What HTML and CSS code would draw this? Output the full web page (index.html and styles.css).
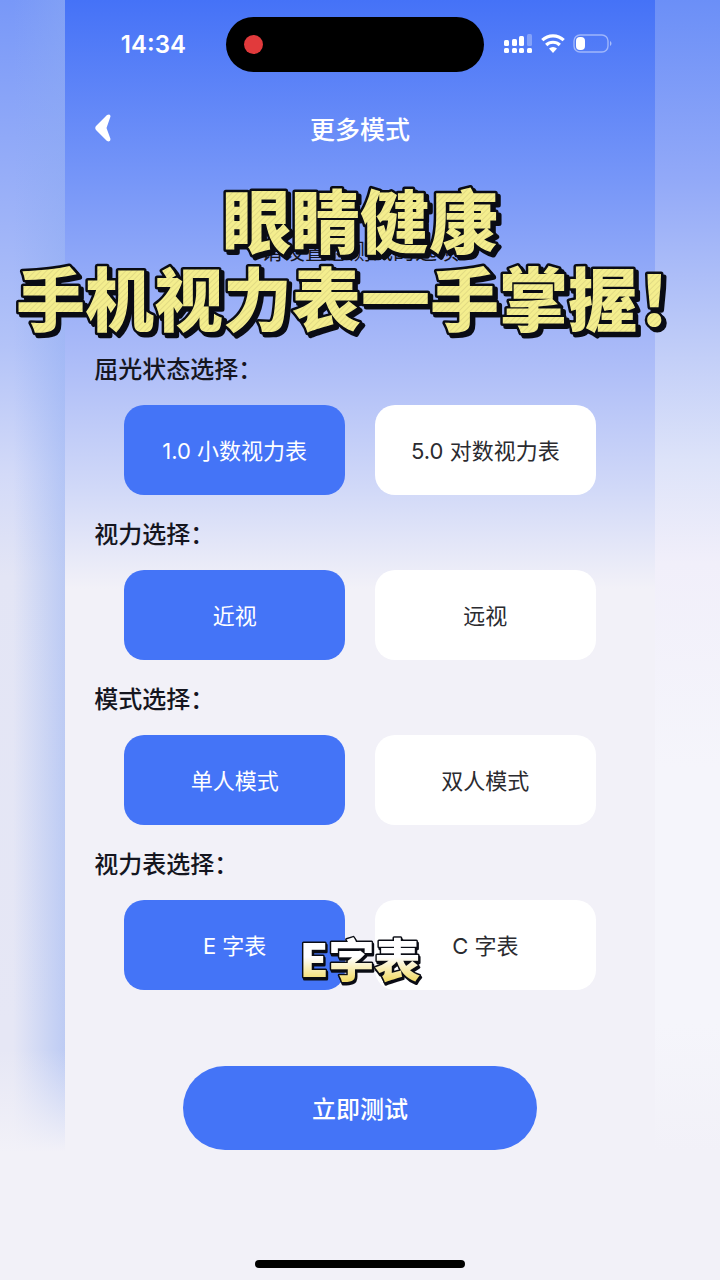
FILE: index.html
```
<!DOCTYPE html>
<html lang="zh-CN">
<head>
    <meta charset="UTF-8">
    <meta name="viewport" content="width=device-width, initial-scale=1.0">
    <title>更多模式</title>
    <link rel="stylesheet" href="styles.css">
</head>
<body>
    <div class="backdrop">
        <div class="side side-left"></div>
        <div class="phone">
            <div class="status-bar">
                <span class="time">14:34</span>
                <div class="island"><span class="rec-dot"></span></div>
                <div class="status-icons">
                    <svg width="29" height="20" viewBox="0 0 29 20" fill="#fff">
                        <rect x="0" y="6" width="5" height="6" rx="1.5"/>
                        <rect x="8" y="5" width="5" height="7" rx="1.5"/>
                        <rect x="15" y="2" width="5" height="10" rx="1.5"/>
                        <rect x="23" y="0" width="5" height="12" rx="1.5" opacity="0.3"/>
                        <rect x="0" y="14" width="5" height="5" rx="1.5"/>
                        <rect x="8" y="14" width="5" height="5" rx="1.5"/>
                        <rect x="15" y="14" width="5" height="5" rx="1.5"/>
                        <rect x="23" y="14" width="5" height="5" rx="1.5"/>
                    </svg>
                    <svg width="24" height="20" viewBox="0 0 24 20" fill="none" stroke="#fff" stroke-width="3.2">
                        <path d="M1.3 6.200a15.400 15.400 0 0 1 21.400 0"/>
                        <path d="M5.2 11a9.800 9.800 0 0 1 13.600 0"/>
                        <path d="M12 19l-4-4.500a5.800 5.800 0 0 1 8 0z" fill="#fff" stroke="none"/>
                    </svg>
                    <svg width="39" height="20" viewBox="0 0 39 20">
                        <rect x="1" y="1" width="34" height="17" rx="6" fill="none" stroke="#fff" stroke-opacity="0.45" stroke-width="1.4"/>
                        <rect x="3" y="3" width="9" height="13" rx="4" fill="#fff"/>
                        <path d="M37 7c2 1 2 4 0 5z" fill="#fff" fill-opacity="0.5"/>
                    </svg>
                </div>
            </div>

            <header class="nav">
                <button class="back" aria-label="返回">
                    <svg width="18" height="28" viewBox="0 0 18 28" fill="#fff">
                        <path d="M12 1Q15.500-0.500 15.500 2.500L11.500 14l4 11Q15.500 28.500 12 27L1 16Q-0.500 14 1 12Z"/>
                    </svg>
                </button>
                <h1>更多模式</h1>
            </header>

            <p class="hint">请设置您测试的选项</p>

            <main class="settings">
                <section>
                    <h2 id="refraction">屈光状态选择：</h2>
                    <div class="options" role="group" aria-labelledby="refraction">
                        <button class="option active">1.0 小数视力表</button>
                        <button class="option">5.0 对数视力表</button>
                    </div>
                </section>
                <section>
                    <h2 id="vision">视力选择：</h2>
                    <div class="options" role="group" aria-labelledby="vision">
                        <button class="option active">近视</button>
                        <button class="option">远视</button>
                    </div>
                </section>
                <section>
                    <h2 id="mode">模式选择：</h2>
                    <div class="options" role="group" aria-labelledby="mode">
                        <button class="option active">单人模式</button>
                        <button class="option">双人模式</button>
                    </div>
                </section>
                <section>
                    <h2 id="chart">视力表选择：</h2>
                    <div class="options" role="group" aria-labelledby="chart">
                        <button class="option active">E 字表</button>
                        <button class="option">C 字表</button>
                    </div>
                </section>
            </main>

            <button class="start">立即测试</button>
            <div class="home-indicator"></div>
        </div>
        <div class="side side-right"></div>
    </div>

    <!-- video captions -->
    <svg class="caption" viewBox="0 0 720 200">
        <defs>
            <pattern id="stripes" width="4" height="4" patternUnits="userSpaceOnUse" patternTransform="rotate(45)" stroke="none">
                <rect width="4" height="4" fill="#f4ee8e"/>
                <rect width="1" height="4" fill="#e2db84"/>
            </pattern>
        </defs>
        <text x="360" y="84" text-anchor="middle">眼睛健康</text>
        <text x="16" y="162">手机视力表一手掌握！</text>
    </svg>
    <svg class="subtitle" viewBox="0 0 720 90">
        <defs>
            <linearGradient id="gold" x1="0" y1="0" x2="0" y2="1">
                <stop offset="0.5" stop-color="#ffffff"/>
                <stop offset="0.85" stop-color="#f2dc6c"/>
            </linearGradient>
        </defs>
        <text x="360" y="60" text-anchor="middle">E字表</text>
    </svg>

    <script>
        document.querySelectorAll('.options').forEach((group) => {
            group.addEventListener('click', (e) => {
                if (!e.target.classList.contains('option')) return;
                group.querySelectorAll('.option').forEach((o) => o.classList.remove('active'));
                e.target.classList.add('active');
            });
        });
    </script>
</body>
</html>
```
FILE: styles.css
```
* {
    box-sizing: border-box;
}

body {
    position: relative;
    margin: 0;
    font-family: Inter, "Noto Sans CJK SC", sans-serif;
    color: #15161f;
}

h1, h2, p {
    margin: 0;
}

button {
    padding: 0;
    border: none;
    font-family: inherit;
    cursor: pointer;
}

.backdrop {
    display: grid;
    grid-template-columns: 9% 1fr 9%;
    min-height: 100vh;
    background-color: #f2f1f8;
}

.side-left {
    background:
        linear-gradient(to bottom, transparent 82%, #f2f1f8 90%),
        linear-gradient(to right, transparent 20%, rgba(140, 170, 242, 0.45)),
        linear-gradient(to bottom, #7898f8 0, #97aef8 14%, #b3c3f8 27%, #d3daf8 37%, #e3e5f5 45%, #e6e7f5 80%);
}

.side-right {
    background: linear-gradient(to bottom, #6b8ff7 0, #92a9f8 14%, #c3cff8 28%, #dde3f9 36%, #f1effa 44%, #f5f5fb 60%, #f5f5fb 80%, #f2f1f8 90%);
}

.phone {
    display: flex;
    flex-direction: column;
    background: linear-gradient(to bottom, #4572f7 0, #7696f8 14%, #a8b9f8 27%, #d0d8f8 38%, #f2f1f8 46%);
}

.status-bar {
    display: grid;
    grid-template-columns: 161fr 258px 171fr;
    align-items: center;
    height: 88px;
    color: #fff;
}

.time {
    padding-left: 16px;
    text-align: center;
    font-size: 24px;
    font-weight: 600;
}

.island {
    display: flex;
    align-items: center;
    height: 55px;
    padding-left: 18px;
    border-radius: 28px;
    background: #000;
}

.rec-dot {
    width: 19px;
    height: 19px;
    border-radius: 50%;
    background: #e13a3c;
}

.status-icons {
    display: flex;
    gap: 8px;
    padding-left: 20px;
}

.nav {
    display: grid;
    grid-template-columns: 60px 1fr 60px;
    align-items: center;
    height: 80px;
    color: #fff;
}

.back {
    display: flex;
    padding-left: 30px;
    background: none;
}

.nav h1 {
    text-align: center;
    font-size: 25px;
    font-weight: 500;
}

.hint {
    height: 184px;
    padding-top: 66px;
    text-align: center;
    font-size: 22px;
    line-height: 34px;
}

.settings {
    padding: 0 5%;
}

.settings h2 {
    font-size: 24px;
    font-weight: 500;
    line-height: 35px;
}

.options {
    display: grid;
    grid-template-columns: 1fr 1fr;
    gap: 30px;
    padding: 18px 30px 22px;
}

.option {
    height: 90px;
    padding-bottom: 2px;
    border-radius: 20px;
    background: #fff;
    color: #2b2b30;
    font-size: 22px;
}

.option.active {
    background: #4474f7;
    color: #fff;
}

.start {
    align-self: center;
    width: 60%;
    height: 84px;
    padding-bottom: 2px;
    margin-top: 54px;
    border-radius: 42px;
    background: #4474f7;
    color: #fff;
    font-size: 24px;
    font-weight: 500;
}

.home-indicator {
    align-self: center;
    width: 210px;
    height: 8px;
    margin-top: auto;
    margin-bottom: 12px;
    border-radius: 4px;
    background: #000;
}

/* Captions lie over the phone screen */
.caption,
.subtitle {
    position: absolute;
    left: 0;
    width: 100%;
    font-family: "Noto Sans CJK SC", sans-serif;
    font-weight: 900;
    stroke: #0a0c14;
    stroke-linejoin: round;
    paint-order: stroke;
    pointer-events: none;
}

.caption {
    top: 164px;
    font-size: 69px;
    fill: url(#stripes);
    stroke-width: 5px;
    filter: drop-shadow(3px 3px 0 #0a0c14);
}

.subtitle {
    top: 917px;
    font-size: 46px;
    fill: url(#gold);
    stroke-width: 3px;
    filter: drop-shadow(1px 2px 0 #0a0c14);
}
```
